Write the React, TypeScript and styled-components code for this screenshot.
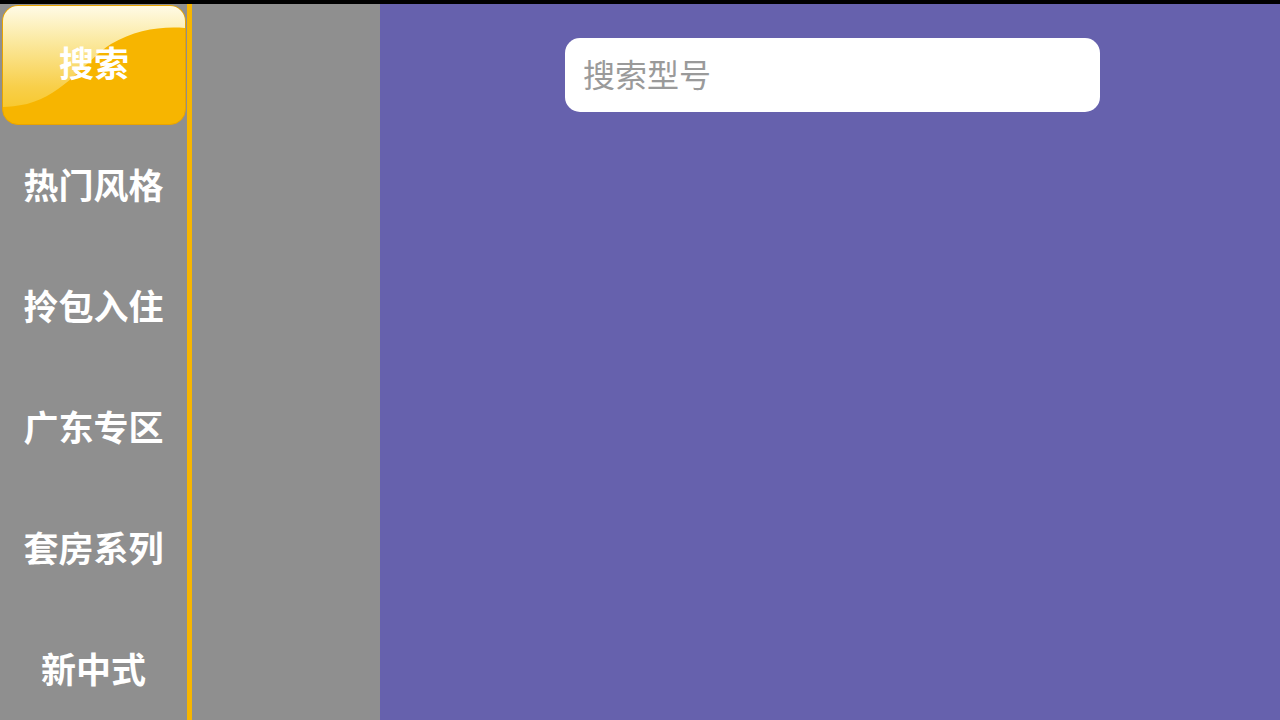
import React from "react";
import styled, { createGlobalStyle } from "styled-components";

const GlobalStyle = createGlobalStyle`
  html, body {
    margin: 0;
    padding: 0;
    width: 100%;
    height: 100%;
    overflow: hidden;
    background: #000;
  }
  #root {
    width: 1280px;
    height: 720px;
  }
  * { box-sizing: border-box; }
`;

const Page = styled.div`
  width: 1280px;
  height: 720px;
  display: flex;
  flex-direction: column;
  font-family: "Noto Sans CJK SC", "Noto Sans", sans-serif;
  overflow: hidden;
`;

const StatusStrip = styled.div`
  height: 4px;
  flex: none;
  background: #000;
`;

const Body = styled.div`
  flex: 1;
  display: flex;
  min-height: 0;
`;

const Sidebar = styled.nav`
  width: 187px;
  flex: none;
  background: #8f8f8f;
  display: flex;
  flex-direction: column;
  overflow: hidden;
`;

const NavItem = styled.div`
  height: 121px;
  flex: none;
  display: flex;
  align-items: center;
  justify-content: center;
  padding-bottom: 5px;
  color: #fff;
  font-size: 35px;
  font-weight: 700;
  line-height: 1;
`;

const ActiveItem = styled.div`
  height: 121px;
  flex: none;
  padding: 1px 1px 0 2px;
  display: flex;
`;

const GlossButton = styled.div`
  position: relative;
  flex: 1;
  border-radius: 16px;
  background: #f7b500;
  border: 1px solid #e9a400;
  overflow: hidden;
  display: flex;
  align-items: center;
  justify-content: center;
  padding-bottom: 8px;
  color: #fff;
  font-size: 35px;
  font-weight: 700;
  line-height: 1;
`;

const Gloss = styled.svg`
  position: absolute;
  left: 0;
  top: 0;
  width: 100%;
  height: 100%;
`;

const Label = styled.span`
  position: relative;
`;

const Divider = styled.div`
  width: 5px;
  flex: none;
  background: #f7b500;
`;

const SubPanel = styled.div`
  width: 188px;
  flex: none;
  background: #8f8f8f;
`;

const Main = styled.main`
  flex: 1;
  background: #6661ad;
  padding: 34px 0 0 185px;
`;

const SearchBox = styled.div`
  width: 535px;
  height: 74px;
  background: #fff;
  border-radius: 15px;
  display: flex;
  align-items: center;
  padding: 0 18px 4px;
`;

const Placeholder = styled.span`
  color: #9a9a9a;
  font-size: 32px;
  font-weight: 400;
  line-height: 1;
`;

const navLabels = ["热门风格", "拎包入住", "广东专区", "套房系列", "新中式"];

export default function App() {
  return (
    <>
      <GlobalStyle />
      <Page>
        <StatusStrip />
        <Body>
          <Sidebar>
            <ActiveItem>
              <GlossButton>
                <Gloss viewBox="0 0 182 118" preserveAspectRatio="none">
                  <defs>
                    <linearGradient id="gl" x1="0" y1="0" x2="0" y2="1">
                      <stop offset="0" stopColor="#fffbe6" />
                      <stop offset="0.35" stopColor="#fbe9a0" />
                      <stop offset="0.8" stopColor="#f8cf4a" />
                      <stop offset="1" stopColor="#f8c930" />
                    </linearGradient>
                  </defs>
                  <path
                    d="M0,0 H182 V22 C158,20 132,24 108,38 C82,55 62,88 24,98 C14,100 6,101 0,101 Z"
                    fill="url(#gl)"
                  />
                </Gloss>
                <Label>搜索</Label>
              </GlossButton>
            </ActiveItem>
            {navLabels.map((t) => (
              <NavItem key={t}>{t}</NavItem>
            ))}
          </Sidebar>
          <Divider />
          <SubPanel />
          <Main>
            <SearchBox>
              <Placeholder>搜索型号</Placeholder>
            </SearchBox>
          </Main>
        </Body>
      </Page>
    </>
  );
}
